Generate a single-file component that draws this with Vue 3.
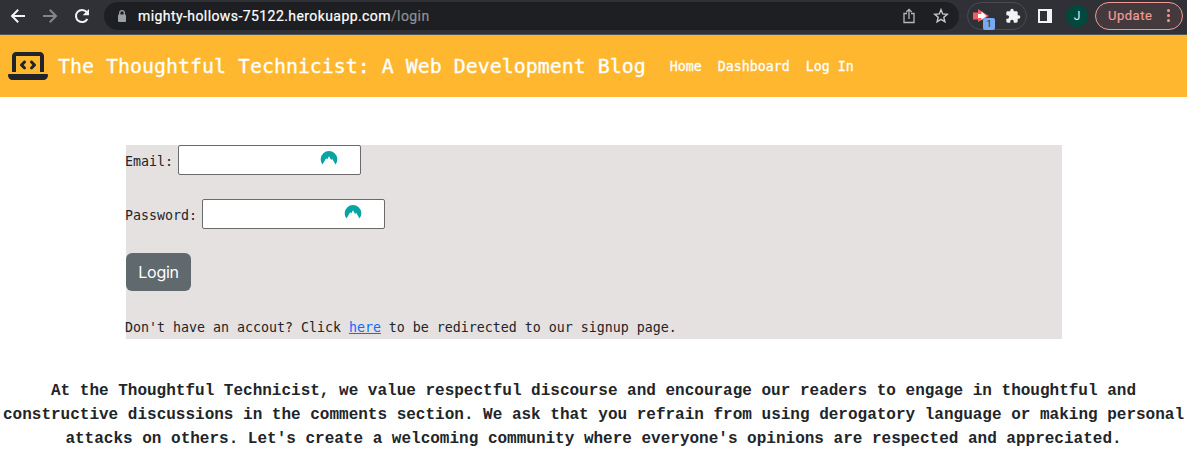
<script setup>
const links = ['Home', 'Dashboard', 'Log In']
const fields = [
  { id: 'email', label: 'Email:', type: 'email' },
  { id: 'password', label: 'Password:', type: 'password' },
]
</script>

<template>
  <div class="window">
    <div class="toolbar">
      <svg class="nav-icon back" width="16" height="16" viewBox="0 0 16 16"><path d="M15 8H2.500M8.200 1.800 2 8l6.200 6.200" /></svg>
      <svg class="nav-icon forward" width="16" height="16" viewBox="0 0 16 16"><path d="M1 8h12.500M7.800 1.800 14 8l-6.200 6.200" /></svg>
      <svg class="nav-icon reload" width="16" height="16" viewBox="0 0 16 16"><path d="M13.400 11A6.100 6.100 0 1 1 12.700 4" /><path class="solid" d="M15 1v6.300H8.700z" /></svg>
      <div class="address">
        <svg class="lock" width="10" height="12" viewBox="0 0 10 12"><rect x="1" y="4.500" width="8" height="7.500" rx="1" /><path d="M2.700 5V3a2.300 2.300 0 0 1 4.600 0v2" /></svg>
        <span class="url">mighty-hollows-75122.herokuapp.com<span class="path">/login</span></span>
        <svg class="share" width="14" height="16" viewBox="0 0 14 16"><path d="M5 5.500H2v9h10v-9H9M7 11V1.500M4.300 4 7 1.300 9.700 4" /></svg>
        <svg class="star" width="16" height="16" viewBox="0 0 16 16"><path d="m8 1.700 1.700 4.200 4.600.4-3.500 3 1.100 4.500L8 11.400l-3.900 2.400 1.100-4.500-3.500-3 4.600-.4z" /></svg>
      </div>
      <div class="extensions">
        <span class="arrow-ext">
          <svg width="18" height="16" viewBox="0 0 18 16"><path fill="#f25c65" d="M0 4.500h5V1l11 7-11 6v-2.500H0z" /><path fill="#fff" d="M5 6h3.500V3.500l5 4.500-5 4V10H5z" /></svg>
          <span class="badge">1</span>
        </span>
        <svg class="puzzle" width="16" height="16" viewBox="0 0 24 24"><path d="M20.500 11H19V7c0-1.100-.9-2-2-2h-4V3.500a2.500 2.500 0 0 0-5 0V5H4c-1.100 0-2 .9-2 2v3.800h1.500a2.700 2.700 0 0 1 0 5.400H2V20c0 1.100.9 2 2 2h3.800v-1.500a2.700 2.700 0 0 1 5.400 0V22H17c1.100 0 2-.9 2-2v-4h1.500a2.500 2.500 0 0 0 0-5z" /></svg>
      </div>
      <span class="panel"></span>
      <span class="avatar">J</span>
      <div class="update"><span class="update-text">Update</span><span class="dots"><i></i><i></i><i></i></span></div>
    </div>

    <header class="navbar">
      <svg class="laptop" width="40" height="32" viewBox="0 0 640 512"><path d="M64 96c0-35.300 28.700-64 64-64H512c35.300 0 64 28.700 64 64V352H512V96H128V352H64V96zM0 403.200C0 392.600 8.600 384 19.200 384H620.800c10.600 0 19.200 8.600 19.200 19.200c0 42.400-34.400 76.800-76.800 76.800H76.800C34.400 480 0 445.600 0 403.200zM281 209l-31 31 31 31c9.400 9.400 9.400 24.600 0 33.900s-24.600 9.400-33.900 0l-48-48c-9.400-9.400-9.400-24.600 0-33.900l48-48c9.400-9.400 24.600-9.400 33.900 0s9.400 24.600 0 33.900zM393 175l48 48c9.400 9.400 9.400 24.600 0 33.900l-48 48c-9.400 9.400-24.600 9.400-33.900 0s-9.400-24.600 0-33.900l31-31-31-31c-9.400-9.400-9.400-24.600 0-33.900s24.600-9.400 33.900 0z" /></svg>
      <span class="brand">The Thoughtful Technicist: A Web Development Blog</span>
      <nav class="links"><a v-for="link in links" :key="link">{{ link }}</a></nav>
    </header>

    <main class="login">
      <div v-for="field in fields" :key="field.id" class="field">
        <label :for="field.id">{{ field.label }}</label>
        <div class="control">
          <input :id="field.id" :type="field.type" />
          <svg class="vault" width="18" height="16" viewBox="0 0 18 16"><path d="M2.500 14.500A8.300 8.300 0 1 1 15.500 14.500L12.200 8.700 11.100 10 9 6.300 7.200 9.400 6.200 8.300z" /></svg>
        </div>
      </div>
      <button class="submit">Login</button>
      <p class="signup">Don't have an accout? Click <a>here</a> to be redirected to our signup page.</p>
    </main>

    <footer class="notice">At the Thoughtful Technicist, we value respectful discourse and encourage our readers to engage in thoughtful and constructive discussions in the comments section. We ask that you refrain from using derogatory language or making personal attacks on others. Let's create a welcoming community where everyone's opinions are respected and appreciated.</footer>
  </div>
</template>

<style>
body {
  margin: 0;
  background: #fff;
}
</style>

<style scoped>
* {
  box-sizing: border-box;
}
.window {
  height: 466px;
  overflow: hidden;
  color: #212529;
  font: 13.290px/24px "DejaVu Sans Mono", monospace;
}
svg {
  display: block;
  flex: none;
}
.toolbar {
  display: flex;
  align-items: center;
  height: 35px;
  padding: 0 4px 3px 10px;
  background: #303136;
  border-bottom: 1px solid #55565a;
  font-family: Roboto, sans-serif;
}
.nav-icon {
  fill: none;
  stroke: #f1f3f4;
  stroke-width: 2;
}
.forward {
  margin-left: 16px;
  stroke: #85868a;
}
.reload {
  margin-left: 16px;
}
.reload .solid {
  fill: #f1f3f4;
  stroke: none;
}
.address {
  display: flex;
  align-items: center;
  width: 855px;
  height: 28px;
  margin-left: 14px;
  padding: 0 10px 0 13px;
  border-radius: 14px;
  background: #1e1f22;
}
.lock {
  fill: #9aa0a6;
}
.lock path {
  fill: none;
  stroke: #9aa0a6;
  stroke-width: 1.300;
}
.url {
  margin-left: 11px;
  color: #fff;
  font-size: 14px;
  letter-spacing: 0.420px;
  white-space: nowrap;
  -webkit-text-stroke: 0.200px;
}
.path {
  color: #8f9195;
}
.share {
  margin-left: auto;
  fill: none;
  stroke: #b4b6b9;
  stroke-width: 1.300;
}
.star {
  margin-left: 17px;
  fill: none;
  stroke: #c8cacd;
  stroke-width: 1.400;
}
.extensions {
  display: flex;
  align-items: center;
  width: 60px;
  height: 28px;
  margin-left: 8px;
  padding-left: 5px;
  border: 1px solid #4b4c50;
  border-radius: 14px;
}
.arrow-ext {
  position: relative;
}
.badge {
  position: absolute;
  left: 10px;
  top: 10px;
  width: 12px;
  height: 12px;
  border-radius: 2px;
  background: #78aaf4;
  color: #202124;
  font-size: 9px;
  line-height: 13px;
  text-align: center;
}
.puzzle {
  margin-left: 14px;
  fill: #f1f3f4;
}
.panel {
  width: 14px;
  height: 14px;
  margin-left: 11px;
  border: 2px solid #f1f3f4;
  border-right-width: 5px;
}
.avatar {
  width: 22px;
  height: 22px;
  margin-left: 14px;
  border-radius: 50%;
  background: #00493c;
  color: #e4eeec;
  font-size: 12px;
  line-height: 22px;
  text-align: center;
}
.update {
  display: flex;
  align-items: center;
  width: 88px;
  height: 28px;
  margin-left: 7px;
  padding-left: 12px;
  border: 1px solid #f29b96;
  border-radius: 14px;
  background: #443a3e;
  color: #f29b96;
}
.update-text {
  padding-top: 1px;
  font-size: 13px;
  letter-spacing: 0.500px;
  -webkit-text-stroke: 0.200px;
}
.dots {
  display: grid;
  gap: 2px;
  margin-left: 15px;
}
.dots i {
  width: 3px;
  height: 3px;
  border-radius: 50%;
  background: #f29b96;
}
.navbar {
  display: flex;
  align-items: center;
  height: 62px;
  padding-left: 8px;
  background: #ffb72f;
  color: #fff;
  -webkit-text-stroke: 0.300px;
}
.laptop {
  fill: #212529;
}
.brand {
  margin-left: 10px;
  padding-top: 2px;
  font-size: 19.930px;
  white-space: nowrap;
}
.links {
  display: flex;
  gap: 16px;
  margin-left: 24px;
  padding-top: 2px;
}
.login {
  width: 936px;
  height: 194px;
  margin: 48px 0 0 126px;
  background: #e5e1e0;
}
.field {
  display: flex;
  align-items: center;
  gap: 5px;
  height: 30px;
  margin-bottom: 24px;
}
.field label {
  margin-left: -1px;
  padding-top: 4px;
}
.control {
  position: relative;
}
.control input {
  display: block;
  width: 183px;
  height: 30px;
  border: 1px solid #6b6b6b;
  border-radius: 2px;
  background: #fff;
}
.vault {
  position: absolute;
  left: 142px;
  top: 5px;
  fill: #06a5a4;
}
.submit {
  display: block;
  width: 65px;
  height: 38px;
  padding: 0;
  border: 0;
  border-radius: 6px;
  background: #60696e;
  color: #fff;
  font: 16px/38px Inter, sans-serif;
  letter-spacing: -0.300px;
}
.signup {
  margin: 25px 0 0 -1px;
}
.signup a {
  color: #0d6efd;
  text-decoration: underline;
}
.notice {
  margin-top: 40px;
  font: bold 16px/24px "Liberation Mono", monospace;
  text-align: center;
}
</style>
